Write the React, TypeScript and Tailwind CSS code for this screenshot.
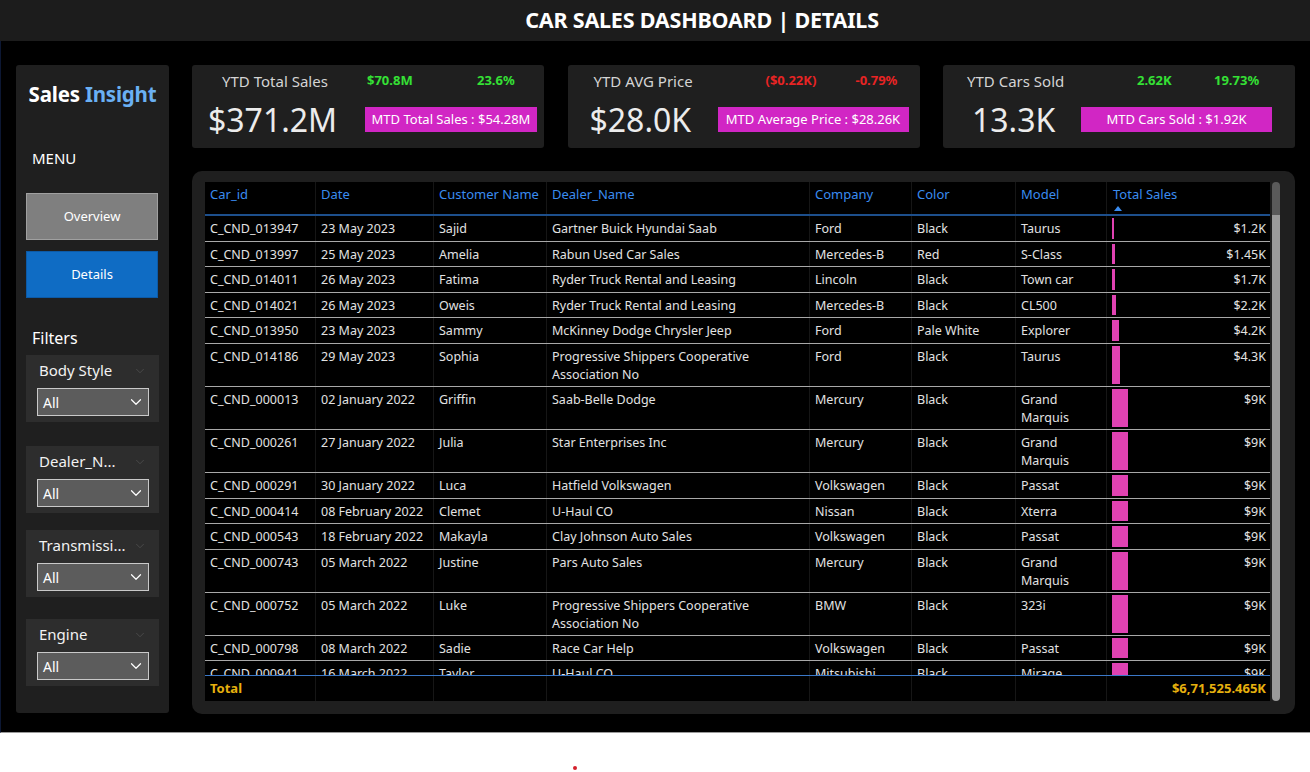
import React from 'react';
import { ChevronDown } from 'lucide-react';

type Row = {
  id: string;
  date: string;
  customer: string;
  dealer: string;
  company: string;
  color: string;
  model: string;
  value: number;
  label: string;
};

const ROWS: Row[] = [
  { id: 'C_CND_013947', date: '23 May 2023', customer: 'Sajid', dealer: 'Gartner Buick Hyundai Saab', company: 'Ford', color: 'Black', model: 'Taurus', value: 1.2, label: '$1.2K' },
  { id: 'C_CND_013997', date: '25 May 2023', customer: 'Amelia', dealer: 'Rabun Used Car Sales', company: 'Mercedes-B', color: 'Red', model: 'S-Class', value: 1.45, label: '$1.45K' },
  { id: 'C_CND_014011', date: '26 May 2023', customer: 'Fatima', dealer: 'Ryder Truck Rental and Leasing', company: 'Lincoln', color: 'Black', model: 'Town car', value: 1.7, label: '$1.7K' },
  { id: 'C_CND_014021', date: '26 May 2023', customer: 'Oweis', dealer: 'Ryder Truck Rental and Leasing', company: 'Mercedes-B', color: 'Black', model: 'CL500', value: 2.2, label: '$2.2K' },
  { id: 'C_CND_013950', date: '23 May 2023', customer: 'Sammy', dealer: 'McKinney Dodge Chrysler Jeep', company: 'Ford', color: 'Pale White', model: 'Explorer', value: 4.2, label: '$4.2K' },
  { id: 'C_CND_014186', date: '29 May 2023', customer: 'Sophia', dealer: 'Progressive Shippers Cooperative\nAssociation No', company: 'Ford', color: 'Black', model: 'Taurus', value: 4.3, label: '$4.3K' },
  { id: 'C_CND_000013', date: '02 January 2022', customer: 'Griffin', dealer: 'Saab-Belle Dodge', company: 'Mercury', color: 'Black', model: 'Grand\nMarquis', value: 9, label: '$9K' },
  { id: 'C_CND_000261', date: '27 January 2022', customer: 'Julia', dealer: 'Star Enterprises Inc', company: 'Mercury', color: 'Black', model: 'Grand\nMarquis', value: 9, label: '$9K' },
  { id: 'C_CND_000291', date: '30 January 2022', customer: 'Luca', dealer: 'Hatfield Volkswagen', company: 'Volkswagen', color: 'Black', model: 'Passat', value: 9, label: '$9K' },
  { id: 'C_CND_000414', date: '08 February 2022', customer: 'Clemet', dealer: 'U-Haul CO', company: 'Nissan', color: 'Black', model: 'Xterra', value: 9, label: '$9K' },
  { id: 'C_CND_000543', date: '18 February 2022', customer: 'Makayla', dealer: 'Clay Johnson Auto Sales', company: 'Volkswagen', color: 'Black', model: 'Passat', value: 9, label: '$9K' },
  { id: 'C_CND_000743', date: '05 March 2022', customer: 'Justine', dealer: 'Pars Auto Sales', company: 'Mercury', color: 'Black', model: 'Grand\nMarquis', value: 9, label: '$9K' },
  { id: 'C_CND_000752', date: '05 March 2022', customer: 'Luke', dealer: 'Progressive Shippers Cooperative\nAssociation No', company: 'BMW', color: 'Black', model: '323i', value: 9, label: '$9K' },
  { id: 'C_CND_000798', date: '08 March 2022', customer: 'Sadie', dealer: 'Race Car Help', company: 'Volkswagen', color: 'Black', model: 'Passat', value: 9, label: '$9K' },
  { id: 'C_CND_000941', date: '16 March 2022', customer: 'Taylor', dealer: 'U-Haul CO', company: 'Mitsubishi', color: 'Black', model: 'Mirage', value: 9, label: '$9K' },
];

const COLS = 'grid grid-cols-[111px_118px_113px_263px_102px_104px_91px_163px]';
const HEADERS = ['Car_id', 'Date', 'Customer Name', 'Dealer_Name', 'Company', 'Color', 'Model'];

function KpiCard({
  label,
  v1,
  v2,
  tone,
  big,
  mtd,
  labelCls,
  v1Cls,
  bigCls,
  boxCls,
}: {
  label: string;
  v1: string;
  v2: string;
  tone: 'up' | 'down';
  big: string;
  mtd: string;
  labelCls: string;
  v1Cls: string;
  bigCls: string;
  boxCls: string;
}) {
  const toneCls = tone === 'up' ? 'text-[#35e035]' : 'text-[#e82424]';
  return (
    <div className="flex-1 h-[83px] rounded-[3px] bg-[#1f1f1f] pt-[6px]">
      <div className="flex items-center h-[20px]">
        <span className={`text-[15px] text-[#d4d4d4] ${labelCls}`}>{label}</span>
        <span className={`text-[13px] font-bold ${toneCls} ${v1Cls}`}>{v1}</span>
        <span className={`text-[13px] font-bold ${toneCls}`}>{v2}</span>
      </div>
      <div className="flex items-center h-[25px] mt-[16px]">
        <span className={`text-[32px] leading-[25px] text-[#ececec] ${bigCls}`}>{big}</span>
        <div className={`h-[25px] flex items-center justify-center bg-[#d126c4] text-[13px] text-white ${boxCls}`}>
          {mtd}
        </div>
      </div>
    </div>
  );
}

function FilterCard({ title, className }: { title: string; className: string }) {
  return (
    <div className={`ml-[10px] w-[133px] h-[67px] bg-[#2d2d2d] ${className}`}>
      <div className="flex items-center justify-between h-[30px] pl-[13px] pr-[12px] pt-[1px]">
        <span className="text-[15px] text-[#f2f2f2]">{title}</span>
        <ChevronDown size={14} strokeWidth={1.2} className="text-[#555]" />
      </div>
      <div className="ml-[11px] mt-[3px] w-[112px] h-[28px] border border-[#c9c9c9] bg-[#5c5c5c] flex items-center justify-between pl-[5px] pr-[3px]">
        <span className="text-[14px] text-white">All</span>
        <ChevronDown size={18} strokeWidth={1.6} className="text-white" />
      </div>
    </div>
  );
}

function Sidebar() {
  return (
    <div className="w-[153px] h-[648px] rounded-[3px] bg-[#1f1f1f] flex flex-col pt-[17px]">
      <div className="text-center text-[20.5px] leading-[24px] font-bold text-white tracking-[-0.2px]">
        Sales <span className="text-[#6ab0f3]">Insight</span>
      </div>
      <div className="mt-[42px] ml-[16px] text-[15px] leading-[20px] text-white">MENU</div>
      <div className="mt-[25px] ml-[10px] w-[132px] h-[47px] bg-[#7f7f7f] border border-[#a0a0a0] flex items-center justify-center text-[13px] text-white">
        Overview
      </div>
      <div className="mt-[11px] ml-[10px] w-[132px] h-[47px] bg-[#0f6cc4] border border-[#0d5aa6] flex items-center justify-center text-[13px] text-white">
        Details
      </div>
      <div className="mt-[30px] ml-[16px] text-[16px] leading-[20px] text-white">Filters</div>
      <FilterCard title="Body Style" className="mt-[7px]" />
      <FilterCard title="Dealer_N..." className="mt-[24px]" />
      <FilterCard title="Transmissi..." className="mt-[17px]" />
      <FilterCard title="Engine" className="mt-[22px]" />
    </div>
  );
}

function Cell({ text, last }: { text: string; last?: boolean }) {
  return (
    <div
      className={`pl-[5px] pr-[2px] pt-[4px] leading-[18px] whitespace-pre-line ${last ? '' : 'border-r border-[#161616]'}`}
    >
      {text}
    </div>
  );
}

function DataRow({ row }: { row: Row }) {
  const barWidth = Math.max(2, Math.round((row.value / 9) * 16));
  const twoLines = row.dealer.includes('\n') || row.model.includes('\n');
  return (
    <div
      className={`${COLS} border-b border-[#a8a8a8] text-[12.5px] text-[#e2e2e2] ${twoLines ? 'h-[43px]' : 'h-[25.6px]'}`}
    >
      <Cell text={row.id} />
      <Cell text={row.date} />
      <Cell text={row.customer} />
      <Cell text={row.dealer} />
      <Cell text={row.company} />
      <Cell text={row.color} />
      <Cell text={row.model} />
      <div className="flex items-stretch pl-[5px] pr-[4px] py-[2px]">
        <div className="bg-[#e042b2]" style={{ width: barWidth }} />
        <div className="ml-auto pt-[2px] leading-[18px]">{row.label}</div>
      </div>
    </div>
  );
}

function DetailsTable() {
  return (
    <div className="flex-1 rounded-[10px] bg-[#1f1f1f] pl-[13px] pr-[15px] pt-[11px] pb-[13px] flex gap-[2px]">
      <div className="w-[1065px] bg-black flex flex-col">
        <div className={`${COLS} h-[34px] border-b-2 border-[#1d4f8c] text-[13px] text-[#3a8cf0]`}>
          {HEADERS.map((h) => (
            <div key={h} className="pl-[5px] pt-[3px] leading-[18px] border-r border-[#161616] whitespace-nowrap">
              {h}
            </div>
          ))}
          <div className="pl-[6px] pt-[3px] leading-[18px]">
            <div>Total Sales</div>
            <div className="ml-[1px] mt-[3px] w-0 h-0 border-x-[4px] border-x-transparent border-b-[5px] border-b-[#3a8cf0]" />
          </div>
        </div>
        <div className="h-[459px] overflow-hidden">
          {ROWS.map((r) => (
            <DataRow key={r.id} row={r} />
          ))}
        </div>
        <div className={`${COLS} h-[26px] border-t border-[#3b78c8] text-[13px] font-bold text-[#e6b00e]`}>
          <div className="pl-[5px] flex items-center border-r border-[#161616]">Total</div>
          <div className="border-r border-[#161616]" />
          <div className="border-r border-[#161616]" />
          <div className="border-r border-[#161616]" />
          <div className="border-r border-[#161616]" />
          <div className="border-r border-[#161616]" />
          <div className="border-r border-[#161616]" />
          <div className="flex items-center justify-end pr-[4px]">$6,71,525.465K</div>
        </div>
      </div>
      <div className="w-[8px] flex flex-col">
        <div className="h-[33px] rounded-t-full bg-[#5a5a5a]" />
        <div className="flex-1 rounded-b-full bg-[#9a9a9a]" />
      </div>
    </div>
  );
}

export default function App() {
  return (
    <div className="w-[1310px] h-[772px] bg-white font-['Noto_Sans',sans-serif] overflow-hidden">
      <div className="h-[41px] bg-[#1c1c1c] flex items-center justify-center pl-[94px]">
        <h1 className="text-[21.5px] font-bold text-white tracking-[-0.2px]">CAR SALES DASHBOARD | DETAILS</h1>
      </div>
      <div className="h-[692px] bg-black border-l border-[#0c1733] border-b border-b-[#9a9a9a] flex gap-[23px] pl-[15px] pr-[15px] pt-[24px]">
        <Sidebar />
        <div className="flex-1 flex flex-col gap-[23px] pb-[19px]">
          <div className="flex gap-[23.5px]">
            <KpiCard
              label="YTD Total Sales"
              v1="$70.8M"
              v2="23.6%"
              tone="up"
              big="$371.2M"
              mtd="MTD Total Sales : $54.28M"
              labelCls="ml-[30px] w-[145px]"
              v1Cls="w-[110px]"
              bigCls="ml-[16px] w-[157px]"
              boxCls="w-[172px]"
            />
            <KpiCard
              label="YTD AVG Price"
              v1="($0.22K)"
              v2="-0.79%"
              tone="down"
              big="$28.0K"
              mtd="MTD Average Price : $28.26K"
              labelCls="ml-[26px] w-[172px]"
              v1Cls="w-[90px]"
              bigCls="ml-[22px] w-[128px]"
              boxCls="w-[191px]"
            />
            <KpiCard
              label="YTD Cars Sold"
              v1="2.62K"
              v2="19.73%"
              tone="up"
              big="13.3K"
              mtd="MTD Cars Sold : $1.92K"
              labelCls="ml-[24px] w-[170px]"
              v1Cls="w-[77px]"
              bigCls="ml-[29px] w-[109px]"
              boxCls="w-[191px]"
            />
          </div>
          <DetailsTable />
        </div>
      </div>
      <div className="h-[39px] flex justify-start">
        <div className="ml-[573px] mt-[33px] w-[4px] h-[4px] rounded-full bg-[#d4202c]" />
      </div>
    </div>
  );
}
